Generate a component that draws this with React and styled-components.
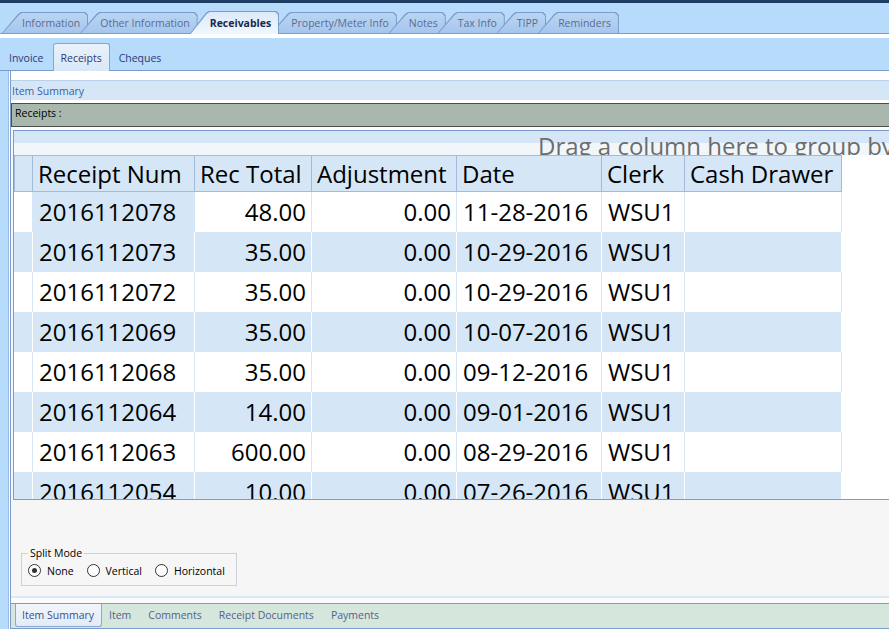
import React from 'react';
import styled, { createGlobalStyle } from 'styled-components';

/*
* Data.
*/

const mainTabs = ['Information', 'Other Information', 'Receivables', 'Property/Meter Info', 'Notes', 'Tax Info', 'TIPP', 'Reminders'];
const subTabs = ['Invoice', 'Receipts', 'Cheques'];
const bottomTabs = ['Item Summary', 'Item', 'Comments', 'Receipt Documents', 'Payments'];

const columns = [
  { key: 'num', title: 'Receipt Num', width: 162, align: 'left' },
  { key: 'total', title: 'Rec Total', width: 117, align: 'right' },
  { key: 'adj', title: 'Adjustment', width: 145, align: 'right' },
  { key: 'date', title: 'Date', width: 145, align: 'left' },
  { key: 'clerk', title: 'Clerk', width: 83, align: 'left' },
  { key: 'drawer', title: 'Cash Drawer', width: 157, align: 'left' },
];

const rows = [
  ['2016112078', '48.00', '0.00', '11-28-2016', 'WSU1', ''],
  ['2016112073', '35.00', '0.00', '10-29-2016', 'WSU1', ''],
  ['2016112072', '35.00', '0.00', '10-29-2016', 'WSU1', ''],
  ['2016112069', '35.00', '0.00', '10-07-2016', 'WSU1', ''],
  ['2016112068', '35.00', '0.00', '09-12-2016', 'WSU1', ''],
  ['2016112064', '14.00', '0.00', '09-01-2016', 'WSU1', ''],
  ['2016112063', '600.00', '0.00', '08-29-2016', 'WSU1', ''],
  ['2016112054', '10.00', '0.00', '07-26-2016', 'WSU1', ''],
];

const gridTemplate = `19px ${columns.map((c) => `${c.width}px`).join(' ')}`;


/*
* App component definition.
*/

export default function App() {
  return (
    <>
      <GlobalStyle />
      <Page>
        <TopStrip />
        <MainTabBar>
          {mainTabs.map((t) => (
            <MainTab key={t} $active={t === 'Receivables'}>
              <MainTabFace $active={t === 'Receivables'}>{t}</MainTabFace>
            </MainTab>
          ))}
        </MainTabBar>
        <WhiteRule />
        <SubTabBar>
          {subTabs.map((t) => (
            <SubTab key={t} $active={t === 'Receipts'}>{t}</SubTab>
          ))}
        </SubTabBar>
        <Body>
          <Panel>
            <SummaryHeader>Item Summary</SummaryHeader>
            <ReceiptsBar>Receipts :</ReceiptsBar>
            <GridArea>
              <Grid>
                <DragRow>Drag a column here to group by</DragRow>
                <HeaderRow>
                  <HeaderCell />
                  {columns.map((c) => (
                    <HeaderCell key={c.key}>{c.title}</HeaderCell>
                  ))}
                </HeaderRow>
                <RowsViewport>
                  {rows.map((r, i) => (
                    <DataRow key={r[0]}>
                      <DataCell $alt={i % 2 === 1} />
                      {r.map((v, j) => (
                        <DataCell
                          key={columns[j].key}
                          $alt={i % 2 === 1}
                          $align={columns[j].align}
                          $focused={i === 0 && j === 0}
                        >
                          {v}
                        </DataCell>
                      ))}
                    </DataRow>
                  ))}
                </RowsViewport>
              </Grid>
            </GridArea>
            <LowerArea>
              <SplitGroup>
                <SplitLegend>Split Mode</SplitLegend>
                <RadioRow>
                  {['None', 'Vertical', 'Horizontal'].map((o) => (
                    <RadioOption key={o}>
                      <RadioCircle $checked={o === 'None'} />
                      {o}
                    </RadioOption>
                  ))}
                </RadioRow>
              </SplitGroup>
            </LowerArea>
            <SplitterRule />
            <BottomTabBar>
              {bottomTabs.map((t) => (
                <BottomTab key={t} $active={t === 'Item Summary'}>{t}</BottomTab>
              ))}
            </BottomTabBar>
          </Panel>
        </Body>
      </Page>
    </>
  );
}


/*
* Styles
*/

const GlobalStyle = createGlobalStyle`
  html, body {
    margin: 0;
    padding: 0;
    background: #b7dbfb;
    overflow: hidden;
  }
  body {
    font-family: "Open Sans", "Noto Sans", sans-serif;
  }
`;

const Page = styled.div`
  width: 889px;
  height: 629px;
  display: flex;
  flex-direction: column;
  overflow: hidden;
  background: #b7dbfb;
`;

const TopStrip = styled.div`
  height: 3px;
  background: #1d3d63;
`;

const MainTabBar = styled.div`
  height: 31px;
  box-sizing: border-box;
  display: flex;
  align-items: flex-end;
  padding-left: 10px;
  border-bottom: 1px solid #7b9ccb;
`;

const tabShape = 'polygon(0 100%, 16px 2px, 19px 0, calc(100% - 3px) 0, 100% 3px, 100% 100%)';

const MainTab = styled.div`
  position: relative;
  z-index: ${({ $active }) => ($active ? 5 : 'auto')};
  height: ${({ $active }) => ($active ? '23px' : '21px')};
  margin-left: -8px;
  margin-bottom: ${({ $active }) => ($active ? '-1px' : '0')};
  padding: 1px 1px 0 1px;
  box-sizing: border-box;
  background: #7c9ccc;
  clip-path: ${tabShape};
`;

const MainTabFace = styled.div`
  height: 100%;
  box-sizing: border-box;
  padding: 0 7px 0 19px;
  display: flex;
  align-items: center;
  font-size: 10.5px;
  font-weight: ${({ $active }) => ($active ? 700 : 400)};
  color: ${({ $active }) => ($active ? '#1b2a50' : '#5b6b90')};
  white-space: nowrap;
  background: ${({ $active }) => ($active
    ? 'linear-gradient(#dceafa, #f0f7fd)'
    : 'linear-gradient(#bad5f3, #a6c6ed)')};
  clip-path: ${tabShape};
`;

const WhiteRule = styled.div`
  height: 4px;
  background: #ffffff;
`;

const SubTabBar = styled.div`
  height: 33px;
  box-sizing: border-box;
  display: flex;
  align-items: flex-end;
  gap: 1px;
  padding-left: 1px;
  border-bottom: 1px solid #7b9ccb;
`;

const SubTab = styled.div`
  height: 28px;
  box-sizing: border-box;
  margin-bottom: -1px;
  padding: 0 7px;
  display: flex;
  align-items: center;
  font-size: 10.5px;
  color: #2b3a78;
  border: 1px solid ${({ $active }) => ($active ? '#86a6d2' : 'transparent')};
  border-bottom: none;
  border-radius: 3px 3px 0 0;
  background: ${({ $active }) => ($active ? 'linear-gradient(#eaf2fb, #d8e7f7)' : 'transparent')};
`;

const Body = styled.div`
  flex: 1;
  display: flex;
  margin-left: 8px;
  background: #ffffff;
  border-left: 1px solid #9dbbe0;
`;

const Panel = styled.div`
  flex: 1;
  display: flex;
  flex-direction: column;
  margin-left: 1px;
  padding-top: 9px;
  border-left: 1px solid #7b9ccb;
`;

const SummaryHeader = styled.div`
  height: 20px;
  box-sizing: border-box;
  padding-left: 1px;
  border-top: 1px solid #b9d0ea;
  background: #d5e6f6;
  font-size: 10.5px;
  line-height: 20px;
  color: #3b5ea6;
`;

const ReceiptsBar = styled.div`
  height: 24px;
  box-sizing: border-box;
  margin-top: 3px;
  padding: 1px 0 0 3px;
  border: 1px solid #4d4d4d;
  border-right: none;
  background: #a9b8ad;
  font-size: 10.5px;
  line-height: 16px;
  color: #000000;
`;

const GridArea = styled.div`
  margin-top: 3px;
  padding-left: 2px;
  background: #f4f8fc;
`;

const Grid = styled.div`
  display: flex;
  flex-direction: column;
  background: #ffffff;
  border: 1px solid #7b9ccb;
  border-right: none;
`;

const DragRow = styled.div`
  height: 24px;
  overflow: hidden;
  padding-left: 524px;
  white-space: nowrap;
  font-size: 24px;
  line-height: 29px;
  color: #6d6d6d;
  background: linear-gradient(#d5e6f6 0, #d5e6f6 52%, #f1f6fb 52%);
`;

const HeaderRow = styled.div`
  display: grid;
  grid-template-columns: ${gridTemplate};
  height: 37px;
`;

const HeaderCell = styled.div`
  box-sizing: border-box;
  padding-left: 5px;
  display: flex;
  align-items: center;
  font-size: 24px;
  color: #000000;
  white-space: nowrap;
  background: #d5e6f6;
  border: 1px solid #a3bbd9;
  border-left: none;
  &:first-child {
    border-left: 1px solid #a3bbd9;
  }
`;

const RowsViewport = styled.div`
  height: 307px;
  overflow: hidden;
`;

const DataRow = styled.div`
  display: grid;
  grid-template-columns: ${gridTemplate};
  height: 40px;
`;

const DataCell = styled.div`
  box-sizing: border-box;
  padding: 0 5px 1px 6px;
  display: flex;
  align-items: center;
  justify-content: ${({ $align }) => ($align === 'right' ? 'flex-end' : 'flex-start')};
  font-size: 24px;
  color: #000000;
  white-space: nowrap;
  background: ${({ $alt, $focused }) => ($alt || $focused ? '#d5e6f6' : '#ffffff')};
  border-right: 1px solid ${({ $alt }) => ($alt ? '#ffffff' : '#d5e6f6')};
`;

const LowerArea = styled.div`
  flex: 1;
  display: flex;
  align-items: flex-end;
  padding: 0 0 10px 10px;
  background: #f6f6f6;
`;

const SplitGroup = styled.fieldset`
  margin: 0;
  width: 216px;
  box-sizing: border-box;
  padding: 0 6px 5px 6px;
  border: 1px solid #c8d1dc;
  font-size: 10.5px;
  color: #000000;
`;

const SplitLegend = styled.legend`
  padding: 0 2px;
  font-size: 10.5px;
  line-height: 15px;
`;

const RadioRow = styled.div`
  display: flex;
  align-items: center;
  gap: 13px;
  height: 19px;
`;

const RadioOption = styled.label`
  display: flex;
  align-items: center;
  gap: 6px;
  font-size: 10.5px;
`;

const RadioCircle = styled.span`
  width: 11px;
  height: 11px;
  border-radius: 50%;
  border: 1px solid #333333;
  background: #ffffff;
  display: flex;
  align-items: center;
  justify-content: center;
  &::after {
    content: '';
    width: 5px;
    height: 5px;
    border-radius: 50%;
    background: ${({ $checked }) => ($checked ? '#333333' : 'transparent')};
  }
`;

const SplitterRule = styled.div`
  height: 7px;
  box-sizing: border-box;
  border-top: 2px solid #dbe8f5;
  background: #fbfbfb;
`;

const BottomTabBar = styled.div`
  height: 26px;
  box-sizing: border-box;
  display: flex;
  padding-left: 4px;
  background: #d5e6dc;
  border-top: 1px solid #7b9ccb;
  border-bottom: 1px solid #7b9ccb;
`;

const BottomTab = styled.div`
  height: 23px;
  box-sizing: border-box;
  padding: ${({ $active }) => ($active ? '0 7px 0 6px' : '0 9px 0 6px')};
  display: flex;
  align-items: center;
  font-size: 10.5px;
  color: ${({ $active }) => ($active ? '#3c4f8a' : '#56618e')};
  border: 1px solid ${({ $active }) => ($active ? '#8aaad4' : 'transparent')};
  border-top: none;
  border-radius: 0 0 3px 3px;
  background: ${({ $active }) => ($active ? 'linear-gradient(#f2f6fb, #e1ebf7)' : 'transparent')};
`;
